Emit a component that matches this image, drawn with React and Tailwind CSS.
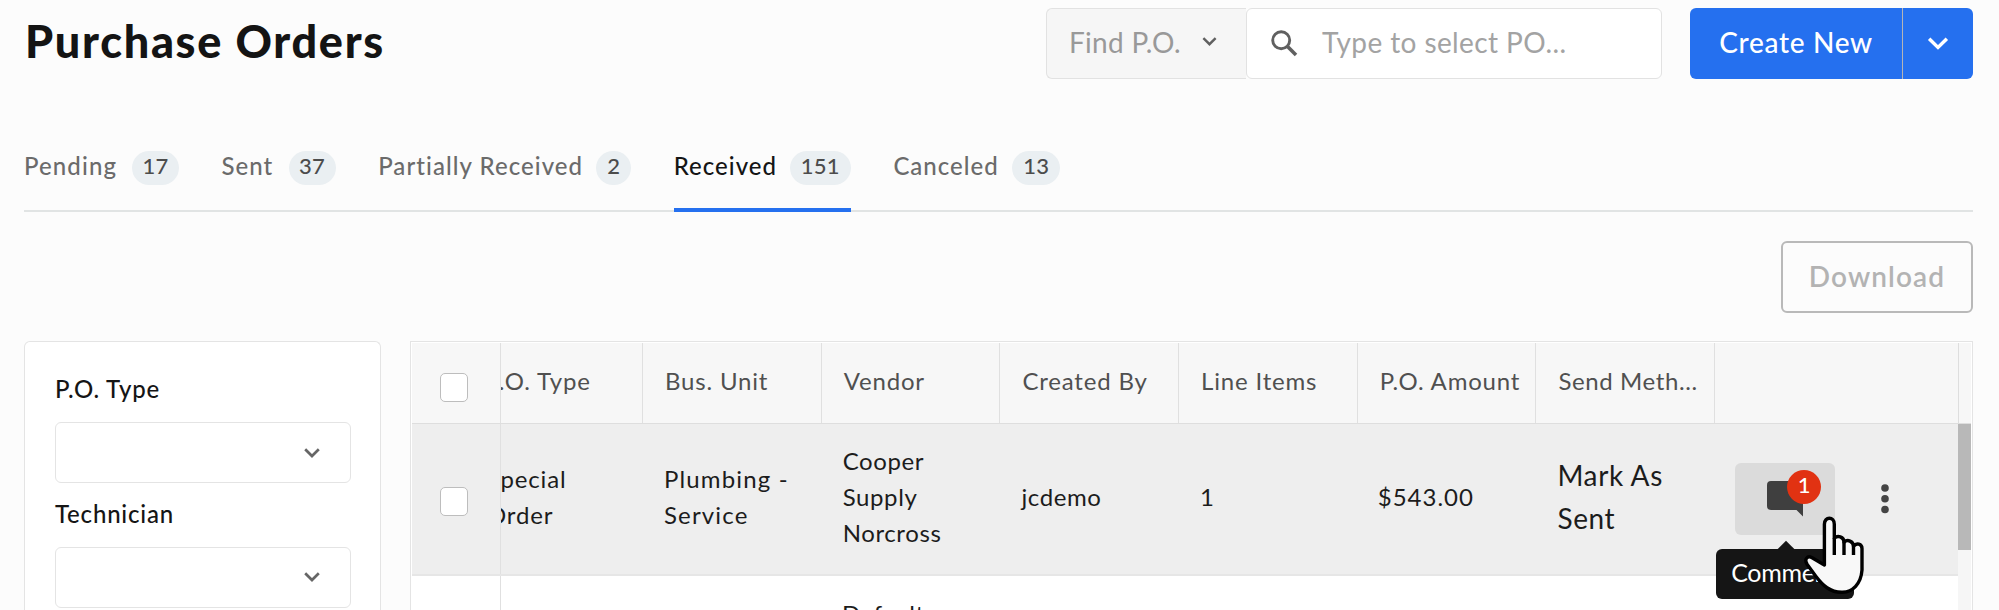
import React from "react";
import clsx from "clsx";

const tabs = [
  { label: "Pending", count: 17, width: "w-[155px]", badge: "w-[47px]", tracking: "tracking-[1.1px]" },
  { label: "Sent", count: 37, width: "w-[114px]", badge: "w-[47px]", tracking: "tracking-[1px]" },
  { label: "Partially Received", count: 2, width: "w-[253px]", badge: "w-[35px]", tracking: "tracking-[1.05px]" },
  { label: "Received", count: 151, width: "w-[177px]", badge: "w-[61px]", tracking: "tracking-[1px]", active: true },
  { label: "Canceled", count: 13, width: "w-[167px]", badge: "w-[48px]", tracking: "tracking-[1px]" },
];

const columns = [
  { title: "Bus. Unit" },
  { title: "Vendor" },
  { title: "Created By" },
  { title: "Line Items" },
  { title: "P.O. Amount" },
  { title: "Send Meth...", tracking: "tracking-[0.6px]" },
];

const filters = ["P.O. Type", "Technician"];

function Chevron({ className }) {
  return (
    <svg viewBox="0 0 16 10" className={className} fill="none" stroke="currentColor" strokeWidth="2.7">
      <path d="M1.2 1.3 L8 8 L14.8 1.3" />
    </svg>
  );
}

function Checkbox() {
  return <div className="h-[29px] w-7 rounded-[5px] border border-[#bdbdbd] bg-white" />;
}

function Cell({ width = "w-[178.7px]", className, children }) {
  return (
    <div className={clsx("flex shrink-0 items-center pb-1", width, className)}>
      <div>{children}</div>
    </div>
  );
}

function TopBar() {
  return (
    <header className="flex h-[71px] items-center">
      <h1 className="flex-1 whitespace-nowrap pb-1 pl-px text-[45px] leading-none font-black tracking-[1.7px] text-[#141414]">
        Purchase Orders
      </h1>
      <div className="flex h-full">
        <div className="flex w-[200px] items-center rounded-l-md border border-r-0 border-[#e2e2e2] bg-[#f6f6f6] pl-[22px] text-[28px] text-[#999]">
          <span className="w-[133px] pb-[3px] tracking-[0.3px]">Find P.O.</span>
          <Chevron className="mb-1 h-[9px] w-[15px] text-[#606060]" />
        </div>
        <div className="flex w-[416px] items-center rounded-md border border-[#e2e2e2] bg-white text-[28px] text-[#a3a3a3]">
          <svg viewBox="0 0 27 27" className="mb-px ml-6 h-[27px] w-[27px] text-[#606060]" fill="none" stroke="currentColor">
            <circle cx="10.2" cy="10.2" r="8.5" strokeWidth="2.9" />
            <path d="M16.3 16.3 L25 25" strokeWidth="3.6" />
          </svg>
          <span className="pb-[3px] pl-6 tracking-[0.4px]">Type to select PO...</span>
        </div>
      </div>
      <div className="ml-7 flex h-full w-[283px] overflow-hidden rounded-md bg-[#2570ef] text-white">
        <button className="w-[213px] border-r border-[#b5b5b5] pb-1 text-[28px] font-medium tracking-[0.7px]">
          Create New
        </button>
        <button className="flex flex-1 items-center justify-center">
          <Chevron className="h-[13px] w-[22px]" />
        </button>
      </div>
    </header>
  );
}

function Tabs() {
  return (
    <nav className="mt-[61px] flex h-[72px] gap-[42.6px] border-b-2 border-[#e1e4e4]">
      {tabs.map((t) => (
        <div
          key={t.label}
          className={clsx(
            "-mb-0.5 flex justify-between border-b-4 pt-[11px]",
            t.width,
            t.active ? "z-10 border-[#2570ef] text-[#151515]" : "border-transparent text-[#6b6b6b]"
          )}
        >
          <span className={clsx("pt-px text-2xl leading-7 font-medium whitespace-nowrap", t.tracking)}>{t.label}</span>
          <span
            className={clsx(
              "flex h-[34px] items-center justify-center rounded-full bg-[#eaeff2] pb-[5px] text-[22px] font-medium tracking-[0.3px] text-[#4c4c4c]",
              t.badge
            )}
          >
            {t.count}
          </span>
        </div>
      ))}
    </nav>
  );
}

function Filters() {
  return (
    <aside className="w-[357px] shrink-0 rounded-t-md border border-b-0 border-[#e4e4e4] bg-white pt-[33px] pr-[29px] pl-[30px]">
      {filters.map((label) => (
        <div key={label} className="h-[124.5px]">
          <div className="text-2xl leading-7 font-medium tracking-[0.8px] text-[#151515]">{label}</div>
          <div className="mt-[19px] flex h-[61px] items-center justify-end rounded-md border border-[#e4e4e4] pr-[30px]">
            <Chevron className="h-[10px] w-4 text-[#666]" />
          </div>
        </div>
      ))}
    </aside>
  );
}

function HandCursor() {
  return (
    <svg
      viewBox="0 0 60 80"
      className="absolute top-[53px] left-[69px] h-20 w-[60px]"
      fill="#f8f8f8"
      stroke="#000"
      strokeWidth="3.4"
      strokeLinejoin="round"
      strokeLinecap="round"
    >
      <path d="M20.4 49 V8.2 C20.4 0.3 30.3 0.3 30.3 8.2 V22.3 C33.5 18.8 40 20.5 40 26.2 C43.5 22.8 49.3 25.3 49.5 30.2 C52.5 26.2 58 28 58 32.5 V54 C57 68 48.5 76 38.5 76.3 C26 76.7 18.5 69 12 60.5 L3.2 48.5 C-0.2 43.3 3.4 39.4 7.7 41.5 Z" />
      <path d="M30.3 22 V39 M40 26 V39 M49.5 30 V39" strokeLinecap="butt" fill="none" />
    </svg>
  );
}

function CommentButton() {
  return (
    <div className="relative z-20 h-[72px] w-[100px] rounded-md bg-[#dbdbdb]">
      <svg viewBox="0 0 36 36" className="absolute top-[18px] left-8 h-9 w-9" fill="#3f3f3f">
        <path d="M4 0 H32 Q36 0 36 4 V35.5 L29.5 29 H4 Q0 29 0 25 V4 Q0 0 4 0 Z" />
      </svg>
      <span className="absolute top-[7px] left-[52px] flex h-[34px] w-[34px] items-center justify-center rounded-full bg-[#e13212] pb-1 text-[22px] font-medium tracking-normal text-white">
        1
      </span>
      <div className="absolute top-[81px] left-[43px] h-4 w-4 rotate-45 bg-[#151515]" />
      <div className="absolute top-[86px] -left-[19px] h-[50px] w-[138px] rounded-md bg-[#151515] pt-[7px] pl-[15px] text-[25px] leading-8 tracking-[-0.3px] text-white">
        Comments
      </div>
      <HandCursor />
    </div>
  );
}

function OrdersTable() {
  return (
    <section className="flex w-[1563px] flex-col border border-b-0 border-[#e4e4e4] bg-white p-px pb-0">
      <div className="flex h-[81px] shrink-0 border-b border-[#dedede] bg-[#f7f7f7] text-2xl tracking-[0.82px] whitespace-nowrap text-[#505050]">
        <div className="z-10 flex w-[89px] shrink-0 items-center border-r border-[#e0e0e0] bg-[#f7f7f7] pt-2 pl-7">
          <Checkbox />
        </div>
        <div className="flex w-[142px] shrink-0 items-center border-r border-[#e0e0e0] pb-1">
          <span className="-ml-[15px]">P.O. Type</span>
        </div>
        {columns.map((c) => (
          <div
            key={c.title}
            className={clsx("flex w-[178.7px] shrink-0 items-center border-r border-[#e0e0e0] pb-1 pl-[22px]", c.tracking)}
          >
            {c.title}
          </div>
        ))}
        <div className="flex-1" />
        <div className="w-[13px] border-l border-[#dedede]" />
      </div>

      <div className="flex flex-1">
        <div className="flex w-[1546px] flex-col text-2xl tracking-[0.82px] text-[#1c1c1c]">
          <div className="flex h-[152px] shrink-0 border-b-2 border-[#e6e6e6] bg-[#eee]">
            <div className="z-10 flex w-[89px] shrink-0 items-center border-r border-[#e0e0e0] bg-[#eee] pt-[5px] pl-7">
              <Checkbox />
            </div>
            <Cell width="w-[142px]" className="leading-9">
              <div className="-ml-[14px]">
                Special
                <br />
                Order
              </div>
            </Cell>
            <Cell className="pl-[21px] leading-9 tracking-[1.15px]">
              Plumbing -
              <br />
              Service
            </Cell>
            <Cell className="pl-[21px] leading-9 tracking-[0.6px]">
              Cooper
              <br />
              Supply
              <br />
              Norcross
            </Cell>
            <Cell className="pl-[21px] tracking-[0.6px]">jcdemo</Cell>
            <Cell className="pl-[21px]">1</Cell>
            <Cell className="pl-5 tracking-[1px]">$543.00</Cell>
            <Cell className="pl-[21px] text-[28px] leading-[43px] tracking-[0.6px]">
              Mark As
              <br />
              Sent
            </Cell>
            <div className="flex items-center gap-[46px] pl-5">
              <CommentButton />
              <svg viewBox="0 0 8 30" className="h-[30px] w-2" fill="#444">
                <circle cx="4" cy="4" r="3.8" />
                <circle cx="4" cy="14.8" r="3.8" />
                <circle cx="4" cy="25.5" r="3.8" />
              </svg>
            </div>
          </div>
          <div className="flex flex-1">
            <div className="w-[89px] shrink-0 border-r border-[#e0e0e0]" />
            <div className="h-0 shrink-0 pt-5 pl-[341px] leading-9 tracking-[0.6px]">Default</div>
          </div>
        </div>
        <div className="flex-1 bg-[#f6f6f6]">
          <div className="h-[126px] bg-[#b8b8b8]" />
        </div>
      </div>
    </section>
  );
}

export default function App() {
  return (
    <div
      style={{ fontFamily: 'Lato, "Open Sans", sans-serif' }}
      className="flex h-[610px] w-[1999px] flex-col overflow-hidden bg-[#fcfcfc] pt-2 pr-[26px] pl-6"
    >
      <TopBar />
      <Tabs />
      <div className="mt-[29px] flex shrink-0 justify-end">
        <button className="h-[72px] w-[192px] rounded-md border-2 border-[#b9b9b9] pb-[3px] text-[28px] font-semibold tracking-[1.1px] text-[#b3b3b3]">
          Download
        </button>
      </div>
      <div className="mt-7 flex h-[269px] shrink-0 justify-between">
        <Filters />
        <OrdersTable />
      </div>
    </div>
  );
}
